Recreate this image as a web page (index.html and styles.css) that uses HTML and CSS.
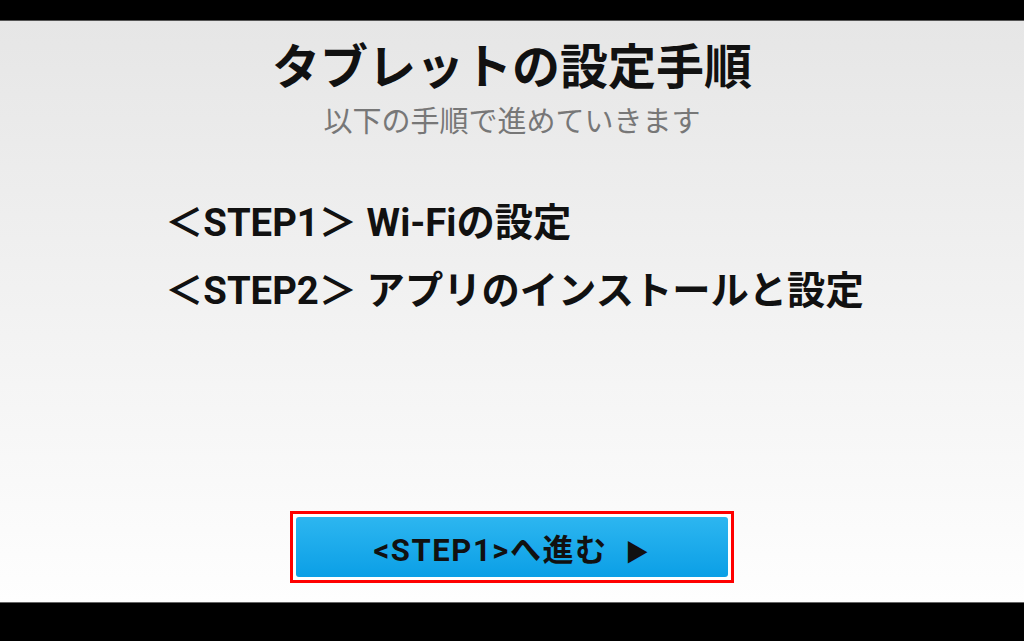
FILE: index.html
```html
<!DOCTYPE html>
<html lang="ja">
<head>
    <meta charset="UTF-8">
    <meta name="viewport" content="width=device-width, initial-scale=1.0">
    <title>タブレットの設定手順</title>
    <link rel="stylesheet" href="styles.css">
</head>
<body>
    <div class="screen">
        <div class="topbar"></div>
        <div class="content">
            <h1 class="title">タブレットの設定手順</h1>
            <p class="subtitle">以下の手順で進めていきます</p>
            <ul class="steps">
                <li>＜STEP1＞ Wi-Fiの設定</li>
                <li>＜STEP2＞ アプリのインストールと設定</li>
            </ul>
            <div class="next-frame">
                <button type="button" class="next-btn">&lt;STEP1&gt;へ進む <span class="arrow">▶</span></button>
            </div>
        </div>
        <div class="bottombar"></div>
    </div>
</body>
</html>
```

FILE: styles.css
```css
body {
    margin: 0;
    padding: 0;
    background-color: #000;
    font-family: Roboto, "Noto Sans CJK JP", sans-serif;
}
.screen {
    width: 1024px;
    height: 641px;
    display: flex;
    flex-direction: column;
}
.topbar {
    height: 20px;
    background-color: #000;
}
.bottombar {
    height: 38px;
    background-color: #000;
    border-top: 1px solid #666;
}
.content {
    flex: 1;
    display: flex;
    flex-direction: column;
    align-items: center;
    border-top: 1px solid #555;
    background: linear-gradient(to bottom, #e6e6e6, #fefefe);
}
.title {
    margin: 19px 0 0;
    font-size: 48px;
    line-height: 56px;
    font-weight: bold;
    color: #111;
}
.subtitle {
    margin: 6px 0 0;
    font-size: 29px;
    line-height: 40px;
    color: #777;
}
.steps {
    list-style: none;
    margin: 47px 0 0;
    padding: 0 0 0 165px;
    align-self: stretch;
}
.steps li {
    font-size: 38.3px;
    line-height: 68px;
    font-weight: bold;
    color: #111;
    white-space: nowrap;
}
.next-frame {
    margin-top: auto;
    margin-bottom: 19px;
    padding: 3px;
    border: 3px solid #f00;
    background-color: #fff;
}
.next-btn {
    display: block;
    width: 432px;
    height: 60px;
    border: none;
    border-radius: 3px;
    background: linear-gradient(to bottom, #2db6f0, #0b9fe6);
    font-family: Roboto, "Noto Sans CJK JP", sans-serif;
    font-size: 31px;
    letter-spacing: 1.6px;
    font-weight: bold;
    color: #111;
    padding: 0;
}
.next-btn .arrow {
    font-size: 24px;
    margin-left: 8px;
}
```
